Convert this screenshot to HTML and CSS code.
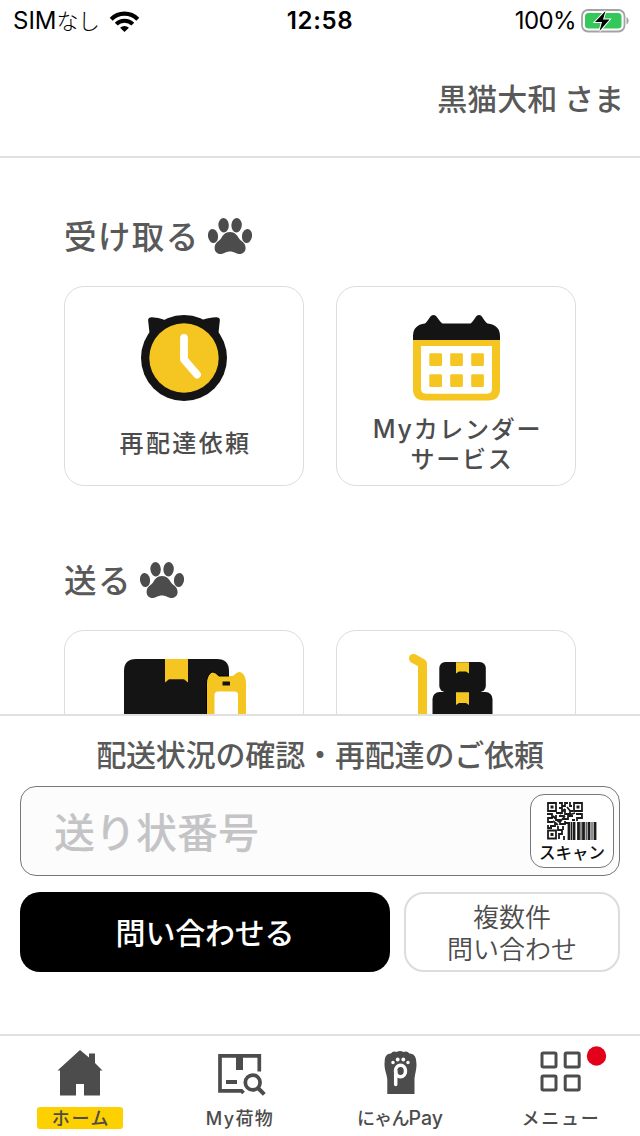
FILE: index.html
```html
<!DOCTYPE html>
<html lang="ja">
<head>
<meta charset="utf-8">
<title>ホーム</title>
<link rel="stylesheet" href="styles.css">
</head>
<body>
<svg class="defs" width="0" height="0">
  <symbol id="paw" viewBox="0 0 44 36">
    <ellipse cx="5" cy="18" rx="5" ry="7" transform="rotate(-8 5 18)"/>
    <ellipse cx="15.6" cy="7.2" rx="5.200" ry="7.2" transform="rotate(-4 15.6 7.2)"/>
    <ellipse cx="28.6" cy="7.2" rx="5.200" ry="7.2" transform="rotate(4 28.6 7.2)"/>
    <ellipse cx="39" cy="18" rx="5" ry="7" transform="rotate(8 39 18)"/>
    <path d="M22 14C27 14 29 17 31 20.500C33 23.500 37.600 24.500 37.600 30C37.600 33.500 35 36 31.500 36C28 36 26.500 33.500 22 33.500C17.500 33.500 16 36 12.500 36C9 36 6.600 33.500 6.600 30C6.600 24.500 11 23.500 13 20.500C15 17 17 14 22 14Z"/>
  </symbol>
</svg>
<div class="status">
  <div class="carrier"><span>SIM<span class="kana">なし</span></span>
    <svg width="32" height="24" viewBox="109 8 32 24" fill="none" stroke="#000">
      <path d="M111.200 18.200A18.800 18.800 0 0 1 137.800 18.200" stroke-width="4.200"/>
      <path d="M116.200 23.200A11.700 11.700 0 0 1 132.800 23.200" stroke-width="4"/>
      <path d="M120.100 26.800A6.500 6.500 0 0 1 128.900 26.800L124.500 31Z" fill="#000" stroke="none"/>
    </svg>
  </div>
  <div class="clock">12:58</div>
  <div class="power"><span>100%</span>
    <svg width="50" height="26" viewBox="580 7 50 26">
      <rect x="582" y="9" width="42.500" height="21.500" rx="6" fill="#fff" stroke="#a3a3a3" stroke-width="1.800"/>
      <rect x="585" y="12" width="36.500" height="15.500" rx="3.500" fill="#34c759"/>
      <path d="M626.500 16q2.200 1 2.200 3.700t-2.200 3.700z" fill="#a3a3a3"/>
      <path d="M605.500 10L595 21H602L599.500 30L609.500 18.500H603Z" fill="#000" stroke="#fff" stroke-width="2" paint-order="stroke"/>
    </svg>
  </div>
</div>
<header class="header">黒猫大和 さま</header>
<main class="main">
  <h2 class="heading"><span>受け取る</span><svg class="paw"><use href="#paw"/></svg></h2>
  <div class="cards">
    <div class="card">
      <svg class="art" viewBox="65 287 238 130">
        <path d="M149.500 333L148.100 320Q148.500 317 152 317.200Q158 317.500 165 320L202 320Q210 317.200 216 317.200Q219.600 317 219.900 320L218.500 333Z" fill="#141414"/>
        <circle cx="184" cy="358" r="43" fill="#141414"/>
        <circle cx="184" cy="358" r="34.700" fill="#f5c622"/>
        <path d="M184 338V359.500L197 374.500" fill="none" stroke="#fff" stroke-width="7.800" stroke-linecap="round" stroke-linejoin="round"/>
      </svg>
      <p class="label single">再配達依頼</p>
    </div>
    <div class="card">
      <svg class="art" viewBox="337 287 238 130">
        <path d="M413 340V336Q413 325 425 323.500C429 320 430 315 433.500 315S438 320 442.500 323.500H470.500C475 320 475.500 315 479 315S483 320 487.500 323.500Q500 325 500 336V340Z" fill="#141414"/>
        <path d="M413 340H500V389Q500 400.500 488 400.500H425Q413 400.500 413 389Z" fill="#f5c622"/>
        <path d="M421 346H492V388.500Q492 393.700 487 393.700H426Q421 393.700 421 388.500Z" fill="#fff"/>
        <g fill="#f5c622"><rect x="429.300" y="353.300" width="12.700" height="12.700" rx="1.200"/><rect x="450.200" y="353.300" width="12.700" height="12.700" rx="1.200"/><rect x="471.200" y="353.300" width="12.700" height="12.700" rx="1.200"/><rect x="429.300" y="374.200" width="12.700" height="12.700" rx="1.200"/><rect x="450.200" y="374.200" width="12.700" height="12.700" rx="1.200"/><rect x="471.200" y="374.200" width="12.700" height="12.700" rx="1.200"/></g>
      </svg>
      <p class="label double"><span class="latin">My</span>カレンダー<br><span class="second">サービス</span></p>
    </div>
  </div>
  <h2 class="heading next"><span>送る</span><svg class="paw"><use href="#paw"/></svg></h2>
  <div class="cards">
    <div class="card">
      <svg class="art" viewBox="65 631 238 130">
        <path d="M124 761V671Q124 659 136 659H217Q229 659 229 671V761Z" fill="#141414"/>
        <path d="M165 659H188V682.500L184 679.200H169L165 682.500Z" fill="#f5c622"/>
        <path d="M206.500 761V683C206.500 677 210 672 213 672Q215 672 219 676H233Q237 672 239.500 672C243 672 246 677 246 683V761Z" fill="#f5c622"/>
        <path d="M206.500 761V683C206.500 677 210 672 213 672Q215 672 219 676H229" fill="none" stroke="#000"/>
        <rect x="222.500" y="681.500" width="7.500" height="4" rx=".5" fill="#141414"/>
        <path d="M214.500 761V695Q214.500 691.500 218 691.500H234.500Q238 691.500 238 695V761Z" fill="#fff"/>
      </svg>
    </div>
    <div class="card">
      <svg class="art" viewBox="337 631 238 130">
        <path d="M413.500 658.500L422.500 663.500V761" fill="none" stroke="#f5c622" stroke-width="9" stroke-linejoin="round"/>
        <circle cx="413.500" cy="658.500" r="4.500" fill="#f5c622"/>
        <rect x="439.300" y="662" width="46.500" height="30" rx="6" fill="#141414"/>
        <rect x="432.500" y="692" width="60" height="60" rx="7" fill="#141414"/>
        <path d="M444 691H481V693H444Z" fill="#141414"/>
        <g fill="#f5c622"><path d="M456 662.200H469V673.500L466 671.500H459L456 673.500Z"/><path d="M456 692.200H469V705L466 703H459L456 705Z"/></g>
      </svg>
    </div>
  </div>
</main>
<section class="inquiry">
  <h3 class="inquiry-title">配送状況の確認・再配達のご依頼</h3>
  <div class="field">
    <span class="placeholder">送り状番号</span>
    <button class="scan">
      <svg width="50" height="38" viewBox="0 0 50 38">
        <g stroke="#1c1c1c" stroke-width="1.800" fill="none">
          <path d="M1 1h8v8h-8zM27 1h8v8h-8zM1 28.500h8v8h-8z"/>
          <path d="M12 1h3v3h3V1h3M23 0v4h2M12 6h3v5H9M18 7v5h5v-3h3M12 14h5v3h4v-3h5M29 12h6v4h-5v3M0 12h5v4H1v4h5M9 13v5h4v4h5v-3M3 24h5v-3M11 24v4h4v4h-3v5M16 24v4M1 23v3h4M18 21h3M25 18h3M17 34v4M13 12l5-5M22 13l6-2M6 19l5 4M13 20l5-6M20 5l4 5M6 14l6 6"/>
        </g>
        <path d="M3.500 3.500h3v3h-3zM29.500 3.500h3v3h-3zM3.500 31h3v3h-3z" fill="#1c1c1c"/>
        <path d="M22 20v18M27 20v18M31.500 20v18M36.500 20v18M42 20v18M48 20v18" stroke="#1c1c1c" stroke-width="2.800"/>
        <path d="M24.500 20v18M34 20v18M39.200 20v18M45 20v18" stroke="#1c1c1c" stroke-width="1"/>
      </svg>
      <span>スキャン</span>
    </button>
  </div>
  <div class="actions">
    <button class="submit">問い合わせる</button>
    <button class="multi">複数件<br>問い合わせ</button>
  </div>
</section>
<nav class="nav">
  <a class="tab active">
    <svg class="tab-icon" viewBox="30 1044 100 56" fill="#4c4c4c"><path d="M80 1050L89 1057.500V1053.500H95V1063L102.500 1070.500H100V1095.500H84V1084H76V1095.500H60V1070.500H57.500Z"/></svg>
    <span class="tab-label">ホーム</span>
  </a>
  <a class="tab">
    <svg class="tab-icon" viewBox="190 1044 100 56" fill="none" stroke="#4c4c4c" stroke-width="3.700"><path d="M259.300 1071.500V1055.800H220V1090.800H241.500L243.500 1093"/><path d="M239.500 1056V1070" stroke-width="7"/><path d="M226 1082H237" stroke-width="4"/><circle cx="252.700" cy="1082.500" r="7.400"/><path d="M258 1088L264.300 1094.300" stroke-width="4"/></svg>
    <span class="tab-label my"><span class="latin">My</span>荷物</span>
  </a>
  <a class="tab">
    <svg class="tab-icon" viewBox="350 1044 100 56"><path d="M387.300 1094V1080C387.300 1075 384.500 1071 384.500 1064Q384 1053 391 1053.500Q393 1050.500 396.500 1052Q400 1049.800 403.500 1052Q407 1050.500 409.500 1053.500Q416.500 1053 416.500 1064C416.500 1071 414.500 1075 414.500 1080V1094Z" fill="#4c4c4c"/><g fill="#fff"><circle cx="393" cy="1062.500" r="1.700"/><circle cx="397.700" cy="1059.500" r="1.900"/><circle cx="403.300" cy="1059.500" r="1.900"/><circle cx="408" cy="1062.500" r="1.700"/></g><g fill="none" stroke="#fff" stroke-width="3.500" stroke-linecap="round"><ellipse cx="400.500" cy="1071" rx="5" ry="5.700"/><path d="M395.700 1071V1084.500"/></g></svg>
    <span class="tab-label pay">にゃん<span class="latin">Pay</span></span>
  </a>
  <a class="tab">
    <svg class="tab-icon" viewBox="510 1044 100 56" fill="none" stroke="#4c4c4c" stroke-width="3"><rect x="542" y="1053" width="14" height="14" rx="1.200"/><rect x="565.200" y="1053" width="14" height="14" rx="1.200"/><rect x="542" y="1076" width="14" height="14" rx="1.200"/><rect x="565.200" y="1076" width="14" height="14" rx="1.200"/><circle cx="596.500" cy="1056" r="9.700" fill="#e2001a" stroke="none"/></svg>
    <span class="tab-label menu">メニュー</span>
  </a>
</nav>
</body>
</html>
```
FILE: styles.css
```css
* { box-sizing: border-box; }
body { margin: 0; width: 640px; height: 1136px; overflow: hidden; display: flex; flex-direction: column; background: #fff; color: #595959; font-family: "Noto Sans CJK JP", sans-serif; }
h2, h3, p { margin: 0; font-weight: 500; }
svg { display: block; flex: none; }
.defs { position: absolute; }
button { font-family: inherit; padding: 0; }
.latin { font-family: Inter, sans-serif; }

.status { height: 40px; flex: none; display: grid; grid-template-columns: 1fr auto 1fr; color: #000; font: 400 24px/40px Inter, "Noto Sans CJK JP", sans-serif; }
.carrier { display: flex; align-items: center; padding-left: 13px; gap: 9px; }
.kana { font-weight: 300; font-size: 22px; letter-spacing: -0.5px; }
.clock { font-weight: 600; letter-spacing: 0.7px; padding-top: 1px; }
.power { display: flex; align-items: center; justify-content: flex-end; padding-right: 10px; gap: 4px; letter-spacing: -0.6px; }
.power span { padding-top: 1px; }

.header { height: 118px; flex: none; border-bottom: 2px solid #e0e0e0; padding: 0 16px 0 0; text-align: right; font-size: 30px; font-weight: 500; line-height: 114px; }

.main { height: 556px; flex: none; overflow: hidden; padding: 54px 64px 0; }
.heading { height: 48px; display: flex; align-items: center; gap: 8px; font-size: 32.5px; line-height: 44px; letter-spacing: 1.4px; }
.heading span { padding-bottom: 3px; }
.heading.next { margin-top: 70px; }
.paw { width: 44px; height: 36px; fill: #4c4c4c; }
.cards { display: flex; gap: 32px; margin-top: 26px; }
.card { width: 240px; height: 200px; border: 1px solid #dcdcdc; border-radius: 20px; overflow: hidden; color: #4c4c4c; text-align: center; }
.art { width: 238px; height: 130px; }
.label { font-size: 24px; line-height: 30px; letter-spacing: 2.4px; }
.single { padding: 10px 0 0 3px; }
.double { margin-top: -4px; padding-left: 3px; letter-spacing: 1.7px; }
.double .latin { font-size: 25px; line-height: 24px; }
.second { margin-left: 9px; }

.inquiry { height: 320px; flex: none; border-top: 2px solid #e0e0e0; padding: 15px 20px 0; }
.inquiry-title { font-size: 30px; line-height: 44px; letter-spacing: -0.15px; text-align: center; }
.field { height: 90px; margin-top: 11px; border: 1px solid #777; border-radius: 16px; background: #fcfcfc; display: flex; align-items: center; justify-content: space-between; padding: 0 5px 0 33px; }
.placeholder { font-size: 41px; font-weight: 500; line-height: 60px; padding-bottom: 3px; color: #c4c4c6; }
.scan { width: 84px; height: 74px; border: 1px solid #777; border-radius: 14px; background: #fff; color: #111; display: flex; flex-direction: column; align-items: center; padding-top: 7px; font-size: 16.500px; line-height: 24px; font-weight: 500; }
.actions { display: flex; gap: 14px; margin-top: 16px; }
.submit { width: 370px; height: 80px; border: 0; border-radius: 20px; background: #000; color: #fff; font-size: 30px; font-weight: 500; padding-bottom: 3px; letter-spacing: -0.2px; }
.multi { width: 216px; height: 80px; border: 2px solid #dcdcdc; border-radius: 20px; background: #fff; color: #4c4c4c; font-size: 26px; line-height: 32px; font-weight: 350; padding-bottom: 1px; }

.nav { flex: 1; border-top: 2px solid #e0e0e0; padding-top: 8px; display: grid; grid-template-columns: repeat(4, 160px); }
.tab { display: flex; flex-direction: column; align-items: center; }
.tab-icon { width: 100px; height: 56px; }
.tab-label { margin-top: 7px; height: 22px; line-height: 20px; font-size: 18px; font-weight: 500; color: #4c4c4c; letter-spacing: 1.6px; white-space: nowrap; }
.active .tab-label { width: 86px; padding-left: 2px; border-radius: 3px; background: #fdd000; text-align: center; }
.my { letter-spacing: 1.4px; }
.pay { letter-spacing: -0.8px; }
.pay .latin { font-size: 19.5px; letter-spacing: 0; line-height: 18px; }
.menu { padding-left: 2px; letter-spacing: 1.8px; }
```
